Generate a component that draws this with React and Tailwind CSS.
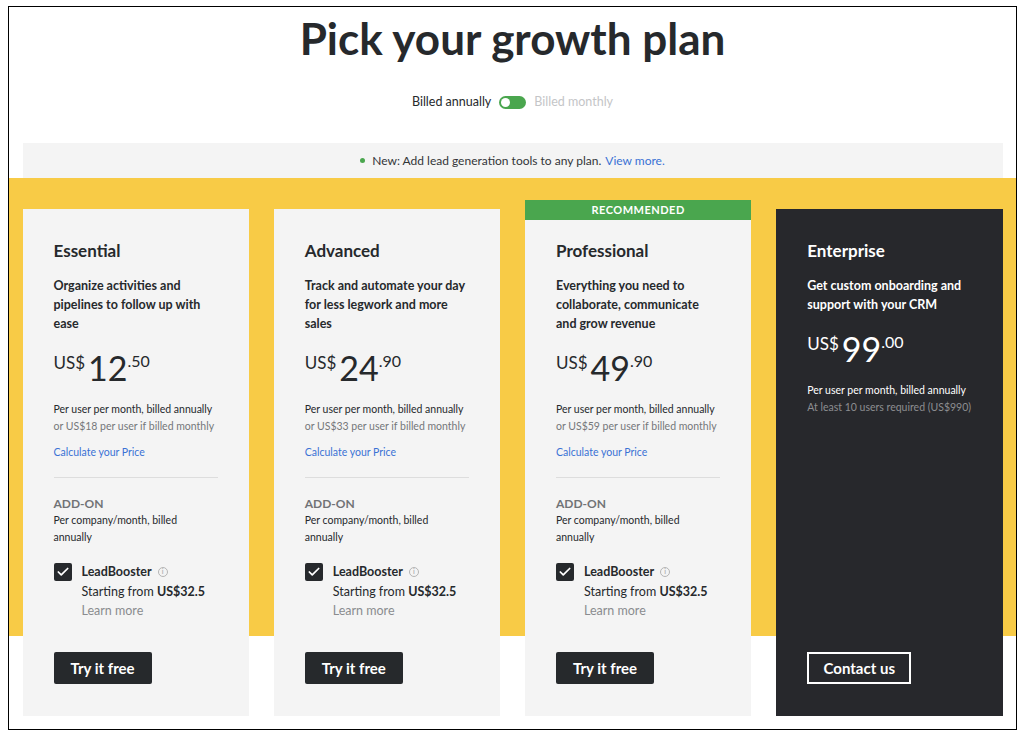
import { Check } from 'lucide-react';

const plans = [
  {
    name: 'Essential',
    desc: ['Organize activities and', 'pipelines to follow up with', 'ease'],
    whole: '12',
    cents: '.50',
    monthly: 'or US$18 per user if billed monthly',
  },
  {
    name: 'Advanced',
    desc: ['Track and automate your day', 'for less legwork and more', 'sales'],
    whole: '24',
    cents: '.90',
    monthly: 'or US$33 per user if billed monthly',
  },
  {
    name: 'Professional',
    desc: ['Everything you need to', 'collaborate, communicate', 'and grow revenue'],
    whole: '49',
    cents: '.90',
    monthly: 'or US$59 per user if billed monthly',
    recommended: true,
  },
];

function Lines({ lines, className }) {
  return (
    <div className={className}>
      {lines.map((l) => (
        <p key={l} className="whitespace-nowrap">{l}</p>
      ))}
    </div>
  );
}

function Price({ whole, cents }) {
  return (
    <div className="flex items-start">
      <span className="text-[17px] leading-none mt-[3px]">US$</span>
      <span className="text-[34px] leading-none ml-[3px]">{whole}</span>
      <span className="text-[16px] leading-none mt-[2px]">{cents}</span>
    </div>
  );
}

function PlanCard({ plan }) {
  return (
    <div className="relative bg-[#f4f4f4] flex flex-col pl-[31px] pr-[28px] pt-[30px] pb-[32px] text-[#26292c]">
      {plan.recommended && (
        <div className="absolute left-0 right-0 top-[-9px] h-[20px] bg-[#4aa64e] text-white text-[11px] font-bold tracking-[0.5px] flex items-center justify-center">
          RECOMMENDED
        </div>
      )}
      <h2 className="text-[17px] leading-[24px] font-bold">{plan.name}</h2>
      <Lines lines={plan.desc} className="mt-[13px] text-[12.5px] leading-[19px] font-bold" />
      <div className="mt-[18px]">
        <Price whole={plan.whole} cents={plan.cents} />
      </div>
      <div className="mt-[16px] text-[10.5px] leading-[17px] whitespace-nowrap">
        <p>Per user per month, billed annually</p>
        <p className="text-[#75777a]">{plan.monthly}</p>
      </div>
      <a className="mt-[9px] text-[10.5px] leading-[17px] text-[#3a72d4]">Calculate your Price</a>
      <div className="mt-[16px] h-px bg-[#dddddd] mr-[3px]" />
      <p className="mt-[17px] text-[12px] leading-[17px] font-bold text-[#717376]">ADD-ON</p>
      <Lines lines={['Per company/month, billed', 'annually']} className="text-[10.5px] leading-[17px]" />
      <div className="mt-[16px] flex items-start gap-[10px]">
        <div className="w-[18px] h-[18px] mt-[1px] rounded-[2px] bg-[#26292c] flex items-center justify-center">
          <Check size={14} strokeWidth={3} className="text-white" />
        </div>
        <div className="text-[12.5px] leading-[19.5px]">
          <div className="flex items-center gap-[6px]">
            <span className="font-bold">LeadBooster</span>
            <span className="w-[10px] h-[10px] rounded-full border border-[#b5b5b5] text-[#b5b5b5] text-[7px] leading-none flex items-center justify-center font-bold">i</span>
          </div>
          <p className="whitespace-nowrap">
            Starting from <span className="font-bold">US$32.5</span>
          </p>
          <p className="text-[#8a8c8f]">Learn more</p>
        </div>
      </div>
      <button className="mt-auto self-start h-[32px] w-[98px] rounded-[2px] bg-[#26292c] text-white text-[15px] font-bold">
        Try it free
      </button>
    </div>
  );
}

function EnterpriseCard() {
  return (
    <div className="bg-[#27282c] flex flex-col pl-[31px] pr-[28px] pt-[30px] pb-[32px] text-white">
      <h2 className="text-[17px] leading-[24px] font-bold">Enterprise</h2>
      <Lines
        lines={['Get custom onboarding and', 'support with your CRM']}
        className="mt-[13px] text-[12.5px] leading-[19px] font-bold"
      />
      <div className="mt-[18px]">
        <Price whole="99" cents=".00" />
      </div>
      <div className="mt-[16px] text-[10.5px] leading-[17px] whitespace-nowrap">
        <p>Per user per month, billed annually</p>
        <p className="text-[#8d8e91]">At least 10 users required (US$990)</p>
      </div>
      <button className="mt-auto self-start h-[32px] w-[104px] border-2 border-white text-white text-[15px] font-bold">
        Contact us
      </button>
    </div>
  );
}

export default function App() {
  return (
    <div className="w-[1024px] h-[738px] bg-white font-['Lato',sans-serif] text-[#26292c]">
      <div className="ml-[8px] pt-[6px]">
        <div className="w-[1009px] h-[724px] border border-black flex flex-col items-center">
          <h1 className="mt-[5px] text-[44px] leading-[52px] font-bold">Pick your growth plan</h1>

          <div className="mt-[28px] h-[20px] flex items-center text-[12.5px]">
            <span>Billed annually</span>
            <span className="ml-[8px] w-[27px] h-[13px] rounded-full bg-[#4aa64e] flex items-center p-[2px]">
              <span className="w-[9px] h-[9px] rounded-full bg-white" />
            </span>
            <span className="ml-[8px] text-[#c4c5c7]">Billed monthly</span>
          </div>

          <div className="mt-[31px] w-[980px] h-[35px] bg-[#f4f4f4] flex items-center justify-center text-[12px] text-[#333538]">
            <span className="w-[5px] h-[5px] rounded-full bg-[#4aa64e] mr-[7px]" />
            <span>New: Add lead generation tools to any plan.</span>
            <a className="ml-[4px] text-[#3a72d4]">View more.</a>
          </div>

          <div className="w-full flex-1 bg-[linear-gradient(to_bottom,#f8cb46_0px,#f8cb46_458px,#ffffff_458px)] pt-[31px] pb-[13px] flex justify-center">
            <div className="w-[980px] grid grid-cols-4 gap-[25px]">
              {plans.map((p) => (
                <PlanCard key={p.name} plan={p} />
              ))}
              <EnterpriseCard />
            </div>
          </div>
        </div>
      </div>
    </div>
  );
}
